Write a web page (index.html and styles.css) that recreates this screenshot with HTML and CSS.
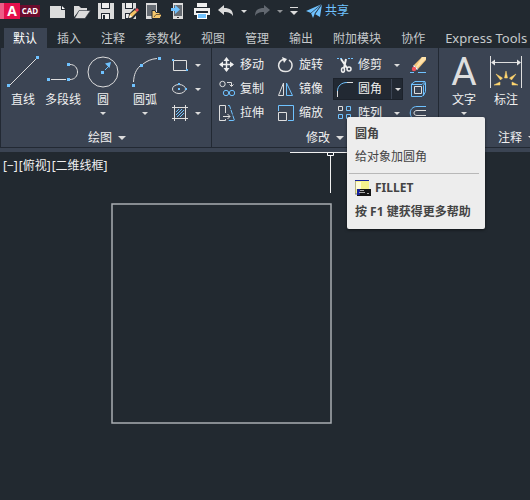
FILE: index.html
```html
<!DOCTYPE html>
<html lang="zh-CN">
<head>
<meta charset="utf-8">
<title>CAD</title>
<link rel="stylesheet" href="styles.css">
</head>
<body>
<header class="quickbar">
  <button class="logo" aria-label="A CAD"><span class="logo-a">A</span><span class="logo-cad">CAD</span></button>
  <div class="quick-tools">
    <button aria-label="新建"><svg width="18" height="16"><path d="M1 3h11v4h4v8H1z" fill="#dcdcdc"/><path d="M13 3l3 3h-3z" fill="#fff"/></svg></button>
    <button aria-label="打开"><svg width="18" height="16"><path d="M1 14V3h5l2 2h6v3H6z" fill="#dcdcdc"/><path d="M6 7.500h11.500L12 15.500H1.500z" fill="#dcdcdc" stroke="#222933" stroke-width=".6"/></svg></button>
    <button aria-label="保存"><svg width="18" height="16"><path d="M1 0h16v16H1z" fill="#dcdcdc"/><path d="M4 0h9v6H4zM4 10h9v6H4z" fill="#222933"/><path d="M5 0h7v5H5zM5 11h7v5H5z" fill="#eee"/><path d="M6 12h2v4H6z" fill="#222933"/></svg></button>
    <button aria-label="另存为"><svg width="18" height="16"><path d="M1 0h14v16H1z" fill="#dcdcdc"/><path d="M4 0h8v6H4zM4 10h8v6H4z" fill="#222933"/><path d="M5 0h6v5H5zM5 11h4v4H5z" fill="#eee"/><path d="M7 16l1-5 6-6 4 4-6 7z" fill="#222933"/><path d="M8 15l1-4 5-4 2 2-5 5z" fill="#f5c365"/><path d="M14 7l2-2 2 2-2 2z" fill="#f2545b"/><path d="M8 15l1-3 2 2z" fill="#fff"/></svg></button>
    <button aria-label="从移动设备打开"><svg width="18" height="16"><path d="M1 0h11v16H1z" fill="#dcdcdc"/><path d="M2 2h9v11H2z" fill="#666c73"/><path d="M7 15.500V7.500h3l1 2h4v2h2l-2 4H7z" fill="#f5c76d" stroke="#222933"/><path d="M9 14l2-2.500h5" fill="none" stroke="#705c38"/></svg></button>
    <button aria-label="保存到移动设备"><svg width="18" height="16"><path d="M4 0h10v16H4z" fill="#dcdcdc"/><path d="M5 2h8v11H5z" fill="#666c73"/><path d="M2 5h4V2l5 4.500L6 11V8H2z" fill="#6fc2ff"/><path d="M8 14h2v1H8z" fill="#333"/></svg></button>
    <button aria-label="打印"><svg width="18" height="16"><path d="M4 0h10v4H4zM1 5h16v7H1z" fill="#eee"/><path d="M3 8h12v2H3z" fill="#222933"/><path d="M4 10h10v6H4z" fill="#fff"/><path d="M5 11h8v4H5z" fill="#6fc2ff"/></svg></button>
    <button aria-label="放弃"><svg width="18" height="16"><path d="M1 7l6-5v3c6 0 9 2 9 8-2-3-4-4-9-4v3z" fill="#dcdcdc"/></svg></button>
    <button class="mini" aria-label="放弃列表"><i class="caret"></i></button>
    <button aria-label="重做"><svg width="18" height="16"><path d="M17 7l-6-5v3c-6 0-9 2-9 8 2-3 4-4 9-4v3z" fill="#626870"/></svg></button>
    <button class="mini dim" aria-label="重做列表"><i class="caret"></i></button>
    <button class="menu" aria-label="自定义"><svg width="10" height="10"><path d="M1 1.500h8" stroke="#dcdcdc"/><path d="M1 5h8l-4 4z" fill="#dcdcdc"/></svg></button>
    <button class="share"><svg width="18" height="16"><path d="M1 8L17 1l-7 9-2 5-2-5z" fill="#6fc2ff"/><path d="M17 1l-2 13-5-3z" fill="#6fc2ff"/><path d="M17 1L6 10M17 1l-7 10" stroke="#222933" stroke-width=".7"/></svg>共享</button>
  </div>
</header>
<nav class="tabs">
  <a href="#" class="active">默认</a><a href="#">插入</a><a href="#">注释</a><a href="#">参数化</a><a href="#">视图</a><a href="#">管理</a><a href="#">输出</a><a href="#">附加模块</a><a href="#">协作</a><a href="#" class="latin">Express Tools</a>
</nav>
<section class="ribbon">
  <div class="panel draw">
    <div class="tools">
      <button class="big"><svg width="32" height="32"><path d="M3 29L29 3" class="w"/><path d="M0 28h3v3H0zM29 0h3v3h-3z" class="b"/></svg>直线</button>
      <button class="big"><svg width="32" height="32"><path d="M4 23.500h15M23 8.500c10 0 10 15 0 15" class="w"/><path d="M0 22h3v3H0zM20 22h3v3h-3zM20 7h3v3h-3z" class="b"/></svg>多段线</button>
      <button class="big"><svg width="32" height="32"><circle cx="16" cy="16" r="15" class="w"/><path d="M18 14l4-4" class="bl"/><path d="M24 6l-1.500 6L18 7.500z" class="b"/><path d="M14 15h3v3h-3z" class="b"/></svg>圆<i class="caret"></i></button>
      <button class="big wide"><svg width="32" height="32"><path d="M4.500 26C5 18 7 14 11 10M14 8C18 5 22 3 28 2.500" class="w"/><path d="M3 28h3v3H3zM11 8h3v3h-3zM29 1h3v3h-3z" class="b"/></svg>圆弧<i class="caret"></i></button>
      <div class="stack minor">
        <button aria-label="矩形"><svg width="18" height="18"><path d="M2.500 4.500h13v10h-13z" class="w"/><path d="M1 3h2v2H1zM15 13h2v2h-2z" class="b"/></svg><i class="caret"></i></button>
        <button aria-label="椭圆"><svg width="18" height="18"><ellipse cx="8" cy="9" rx="6.500" ry="4.500" class="w"/><path d="M7 3h2v2H7zM7 8h2v2H7zM14 8h2v2h-2z" class="b"/></svg><i class="caret"></i></button>
        <button aria-label="图案填充"><svg width="18" height="18"><path d="M1 3.500h16M1 14.500h16M3.500 1v16M14.500 1v16" class="w"/><path d="M5 8l3-3M5 11l6-6M6 13l7-7M9 13l4-4" class="bl"/></svg><i class="caret"></i></button>
      </div>
    </div>
    <button class="title">绘图<i class="caret large"></i></button>
  </div>
  <div class="panel modify">
    <div class="tools">
      <div class="stack">
        <button><svg width="18" height="18"><path d="M3 8.500h12M8.500 3v12" stroke="#f0f0f0" stroke-width="1.500"/><path d="M8.500 1l3 4h-6zM8.500 16l3-4h-6zM1 8.500l4-3v6zM16 8.500l-4-3v6z" fill="#f0f0f0"/></svg>移动</button>
        <button><svg width="18" height="18"><circle cx="4.500" cy="4" r="2.700" class="w"/><path d="M9 2.500h4.500V6M11.500 4.500l2 2 2-2" class="w"/><circle cx="8" cy="13" r="2.700" class="bl"/><circle cx="14" cy="13" r="2.700" class="bl"/></svg>复制</button>
        <button><svg width="18" height="18"><path d="M7.500 9V1.500h-6v15h6V15" class="w"/><path d="M10 1.500h1.500l5 15H10" fill="none" stroke="#6fc2ff" stroke-dasharray="5 1"/><path d="M5 12.500h7M9.500 10l2.500 2.500L9.500 15" class="w"/></svg>拉伸</button>
      </div>
      <div class="stack">
        <button><svg width="18" height="18"><path d="M6 3.500C-1 7 1 15.500 8.500 15.500c7 0 8.500-8 3.500-11.500" stroke="#e6e6e6" stroke-width="1.500" fill="none"/><path d="M5 1l5 2-3 4z" fill="#f0f0f0"/></svg>旋转</button>
        <button><svg width="18" height="18"><path d="M6.500 3v12.500h-5z" class="w"/><path d="M9.500 3v12.500h6z" class="bl"/></svg>镜像</button>
        <button><svg width="18" height="18"><path d="M1.500 7V1.500h15v15H11" class="bl"/><path d="M1.500 8.500h8v8h-8z" class="w"/></svg>缩放</button>
      </div>
      <div class="stack edit">
        <div class="split"><button><svg width="18" height="18"><path d="M1 2.500h5M12 2.500h5" stroke="#6fc2ff" stroke-dasharray="2 1"/><path d="M5 3l6 9M10 3l-2 9" stroke="#f0f0f0" stroke-width="2"/><ellipse cx="7" cy="14" rx="1.500" ry="2.200" stroke="#f0f0f0" stroke-width="1.500" fill="none"/><circle cx="13" cy="13" r="2" stroke="#f0f0f0" stroke-width="1.500" fill="none"/></svg>修剪</button><button class="arrow" aria-label="修剪选项"><i class="caret"></i></button></div>
        <div class="split hot"><button><svg width="18" height="18"><path d="M1.500 17v-6M11 2.500h6" class="w"/><path d="M1.500 11c0-5 4-8.500 9.500-8.500" class="bl"/></svg>圆角</button><button class="arrow" aria-label="圆角选项"><i class="caret"></i></button>
          <div class="tooltip" role="tooltip">
            <strong>圆角</strong>
            <p>给对象加圆角</p>
            <hr>
            <div class="command"><svg width="16" height="16"><path d="M0 1h14v13H0z" fill="#f6f18d"/><path d="M1 2h5v7H1z" fill="#fffcd8"/><path d="M0 0h14v1H0z" fill="#17229c"/><path d="M0 1v13h3" fill="none" stroke="#777"/><path d="M2 9h14v7H2z" fill="#151515"/><path d="M2 9h3v6H2z" fill="#17229c"/><path d="M5 10.500h4M4 12.500h6M12 13.500h2" stroke="#aaa"/></svg>FILLET</div>
            <strong>按 F1 键获得更多帮助</strong>
          </div>
        </div>
        <div class="split"><button><svg width="18" height="18"><path d="M2.500 2.500h4v4h-4z" class="w"/><path d="M10.500 2.500h4v4h-4zM2.500 10.500h4v4h-4zM10.500 10.500h4v4h-4z" class="bl"/></svg>阵列</button><button class="arrow" aria-label="阵列选项"><i class="caret"></i></button></div>
      </div>
      <div class="stack single">
        <button aria-label="删除"><svg width="18" height="18"><path d="M13 1h4v3L9 13l-4-4z" fill="#f5c77a"/><path d="M13 1h4v2l-9 9-1-1z" fill="#ffe3ac"/><path d="M5 9l4 4-1 1-4-4z" fill="#fff"/><circle cx="5" cy="13" r="2.200" fill="#f2545b"/><path d="M1 16.500h4M9 16.500h8" class="bl"/></svg></button>
        <button aria-label="分解"><svg width="18" height="18"><path d="M5.500 6.500h7v7h-7z" class="w"/><path d="M2 4.500l4-3h10l-3 3zM14.500 5.500l2-3v9l-2 4z" class="bl"/><path d="M2.500 5v11.500h10.500l1.500-1.500" class="bl"/></svg></button>
        <button aria-label="偏移"><svg width="18" height="18"><path d="M17 2.500H8c-9 0-9 13 0 13h9" class="bl"/><path d="M17 6.500H8c-4 0-4 5 0 5h9" class="w"/></svg></button>
      </div>
    </div>
    <button class="title">修改<i class="caret large"></i></button>
  </div>
  <div class="panel annotate">
    <div class="tools">
      <button class="big"><span class="glyph" aria-hidden="true">A</span>文字<i class="caret"></i></button>
      <button class="big"><svg width="32" height="32"><path d="M.5 0v32M31.500 0v32M2 6.500h28" class="w"/><path d="M1 6.500l4-3v6zM31 6.500l-4-3v6z" fill="#e6e6e6"/><path d="M14.500 22l1.500-7 1.500 7zM10.500 24L6 18l6.500 4zM21.500 24l4.500-6-6.500 4zM10 26v3H4zM22 26v3h6z" fill="#ffd56f" stroke="#ffd56f" stroke-width=".5"/></svg>标注</button>
    </div>
    <button class="title">注释<i class="caret large"></i></button>
  </div>
</section>
<main class="canvas">
  <div class="view-label"><span>[−]</span><span>[俯视]</span><span>[二维线框]</span></div>
  <svg class="drawing" width="348" height="280">
    <path d="M112 52h219v219H112z" fill="none" stroke="#a9adb1" stroke-width="1.500"/>
    <path d="M290 .5h58M330.500 4v37" stroke="#f0f0f0"/>
    <path d="M327.500.5h6v3h-6z" fill="#222933" stroke="#fff"/>
  </svg>
</main>
</body>
</html>
```
FILE: styles.css
```css
* { box-sizing: border-box; }
body {
  margin: 0;
  min-height: 100vh;
  display: flex;
  flex-direction: column;
  overflow: hidden;
  background: #222930;
  color: #f0f0f0;
  font: 12px/16px "Noto Sans", "Noto Sans CJK SC", sans-serif;
}
button {
  display: flex;
  align-items: center;
  flex: none;
  margin: 0;
  padding: 0;
  border: 0;
  background: none;
  color: inherit;
  font: inherit;
  white-space: nowrap;
}
svg { display: block; flex: none; }
.w { fill: none; stroke: #dedede; }
.b { fill: #6fc2ff; }
.bl { fill: none; stroke: #6fc2ff; }
.caret {
  border: 3px solid transparent;
  border-top-color: #dcdcdc;
  border-bottom: 0;
}
.caret.large { border-width: 4px 4px 0; }

.quickbar { display: flex; align-items: flex-start; height: 28px; }
.logo { height: 16px; margin-top: 3px; border-left: 4px solid #ef5c87; }
.logo-a {
  width: 16px;
  background: #e5104d;
  color: #fff;
  font: bold 14px/16px "Open Sans", sans-serif;
}
.logo-cad {
  width: 20px;
  height: 12px;
  background: #6c0c2d;
  color: #fff;
  font: bold 8px/12px "Open Sans", sans-serif;
}
.quick-tools { display: flex; align-items: center; height: 22px; gap: 6px; margin-left: 9px; }
.mini { width: 6px; justify-content: center; }
.dim { opacity: .6; }
.menu { margin: 0; }
.share { gap: 2px; color: #6fc2ff; }

.tabs { display: flex; height: 20px; padding-left: 4px; overflow: hidden; }
.tabs a { flex: none; padding: 3px 10px 1px; color: #c6c9cc; text-decoration: none; }
.tabs .active { padding: 3px 10px 1px 9px; background: #3b4453; color: #fff; }
.tabs .latin { padding: 2px 0 2px 10px; font-size: 13px; }

.ribbon {
  display: flex;
  height: 104px;
  background: #3b4453;
  border-bottom: 4px solid #3b4453;
}
.panel {
  display: flex;
  flex: none;
  flex-direction: column;
  justify-content: space-between;
  border-bottom: 1px solid #222933;
  border-right: 1px solid #222933;
}
.draw { border-left: 1px solid #222933; padding-left: 2px; width: 212px; }
.modify { width: 227px; padding-left: 6px; }
.annotate { flex: 1; min-width: 0; padding-left: 4px; border-right: 0; overflow: hidden; }
.tools { display: flex; }
.big { flex-direction: column; width: 40px; height: 76px; padding-top: 8px; }
.big svg { margin-bottom: 4px; }
.big .caret { margin-top: 4px; }
.wide { width: 44px; }
.annotate .big { width: 42px; }
.glyph {
  height: 32px;
  margin-bottom: 4px;
  color: #dedede;
  font: 39px/32px Roboto, sans-serif;
}
.title { align-self: center; gap: 6px; height: 18px; }
.modify .title { margin-right: 6px; }
.annotate .title { align-self: flex-start; margin-left: 55px; }
.stack { display: flex; flex-direction: column; gap: 2px; width: 59px; padding-top: 6px; }
.stack button { height: 22px; gap: 4px; }
.minor { width: 38px; padding-left: 4px; }
.minor button { gap: 6px; }
.edit { width: 75px; margin-left: -3px; }
.single { width: 20px; margin-left: 1px; }
.split { position: relative; display: flex; width: 70px; height: 22px; padding-left: 3px; }
.split .arrow { width: 12px; margin-left: auto; justify-content: center; }
.hot { background: #222933; outline: 1px solid #1c222b; outline-offset: -1px; }
.hot .arrow { border-left: 1px solid #3b4453; }

.tooltip {
  position: absolute;
  z-index: 2;
  top: 39px;
  left: 14px;
  width: 138px;
  padding: 9px 6px 9px 8px;
  border-radius: 2px;
  background: #ededed;
  color: #444;
  box-shadow: 0 1px 3px #0008;
  white-space: nowrap;
}
.tooltip strong { display: block; }
.tooltip p { margin: 7px 0 8px; }
.tooltip hr { margin: 0 0 6px -6px; border: 0; border-top: 1px solid #b8b8b8; }
.command { display: flex; gap: 4px; margin-bottom: 8px; font-weight: bold; }

.canvas { position: relative; flex: 1; padding: 6px 3px; }
.view-label { display: flex; gap: 1px; }
.drawing { position: absolute; top: 0; left: 0; }
```
